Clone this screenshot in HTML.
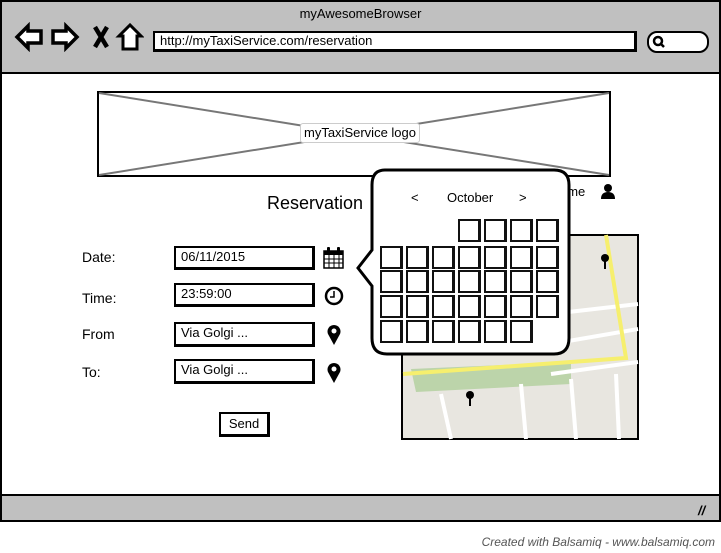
<!DOCTYPE html>
<html><head><style>
body{margin:0;width:721px;height:553px;background:#fff;font-family:"Liberation Sans",sans-serif;position:relative;overflow:hidden}
.a{position:absolute}
.inp{position:absolute;border:2px solid #000;border-right-width:3px;border-bottom-width:3px;background:#fff;font-size:13px;padding-left:5px;box-sizing:border-box;line-height:18px}
.lbl{position:absolute;font-size:14px}
.c{position:absolute;width:23px;height:23px;box-sizing:border-box;border:2px solid #111;border-right-width:3px;background:#fff}
</style></head><body>
<div class="a" style="left:0;top:0;width:717px;height:70px;background:#c0c0c0;border:2px solid #000"></div>
<div class="a" style="left:0;top:0;width:721px;top:6px;text-align:center;font-size:13px">myAwesomeBrowser</div>
<svg class="a" style="left:14px;top:22px" width="130" height="30" viewBox="0 0 130 30">
<path d="M3 15 L14 4 L14 9 L27 9 L27 21 L14 21 L14 26 Z" fill="#fff" stroke="#000" stroke-width="3.5"/>
<path d="M78 15 L67 4 L67 9 L54 9 L54 21 L67 21 L67 26 Z" transform="translate(-15 0)" fill="#fff" stroke="#000" stroke-width="3.5"/>
<path d="M81 5 L93 25 M93 5 L81 25" stroke="#000" stroke-width="4.5"/>
<path d="M116 3 L105 14 L109 14 L109 27 L123 27 L123 14 L127 14 Z" fill="#fff" stroke="#000" stroke-width="3"/>
</svg>
<div class="a" style="left:153px;top:31px;width:474px;height:16px;background:#fff;border:2px solid #000;border-right-width:3px;border-bottom-width:3px;font-size:13px;line-height:16px;padding-left:5px">http://myTaxiService.com/reservation</div>
<div class="a" style="left:647px;top:31px;width:58px;height:18px;background:#fff;border:2px solid #000;border-radius:10px"></div>
<svg class="a" style="left:651px;top:34px" width="16" height="16"><circle cx="7" cy="7" r="4" fill="none" stroke="#000" stroke-width="2.5"/><path d="M9 9 L13 13" stroke="#000" stroke-width="2.5"/></svg>
<div class="a" style="left:0;top:72px;width:717px;height:423px;border-left:2px solid #000;border-right:2px solid #000"></div>
<div class="a" style="left:0;top:494px;width:717px;height:24px;background:#c0c0c0;border:2px solid #000"></div>
<div class="a" style="left:698px;top:503px;font-size:13px;font-weight:bold;font-style:italic">//</div>
<div class="a" style="right:6px;top:535px;font-size:12px;font-style:italic;color:#555">Created with Balsamiq - www.balsamiq.com</div>
<svg class="a" style="left:97px;top:91px" width="514" height="86"><rect x="1" y="1" width="512" height="84" fill="#fff" stroke="#000" stroke-width="2"/><path d="M2 2 L512 84 M512 2 L2 84" stroke="#777" stroke-width="2"/></svg>
<div class="a" style="left:300px;top:123px;width:118px;height:18px;background:#fff;border:1px solid #ccc;border-radius:3px;font-size:13px;text-align:center;line-height:18px">myTaxiService logo</div>
<div class="a" style="left:267px;top:193px;font-size:18px">Reservation</div>
<div class="a" style="left:560px;top:184px;font-size:13px">ame</div>
<svg class="a" style="left:600px;top:183px" width="16" height="16"><circle cx="8" cy="5" r="4"/><path d="M1 16 Q1 9 8 9 Q15 9 15 16 Z"/></svg>
<div class="lbl" style="left:82px;top:249px">Date:</div>
<div class="lbl" style="left:82px;top:290px">Time:</div>
<div class="lbl" style="left:82px;top:326px">From</div>
<div class="lbl" style="left:82px;top:364px">To:</div>
<div class="inp" style="left:174px;top:246px;width:141px;height:24px">06/11/2015</div>
<div class="inp" style="left:174px;top:283px;width:141px;height:24px">23:59:00</div>
<div class="inp" style="left:174px;top:322px;width:141px;height:25px">Via Golgi ...</div>
<div class="inp" style="left:174px;top:359px;width:141px;height:25px">Via Golgi ...</div>
<svg class="a" style="left:322px;top:246px" width="24" height="24"><rect x="2" y="5" width="19" height="17" fill="#fff" stroke="#000" stroke-width="1.5"/><rect x="2" y="5" width="19" height="4"/><path d="M2 13H21M2 17H21M7 9V22M12 9V22M17 9V22" stroke="#000"/><rect x="5" y="1" width="3" height="6" rx="1"/><rect x="15" y="1" width="3" height="6" rx="1"/></svg>
<svg class="a" style="left:323px;top:285px" width="22" height="22"><circle cx="11" cy="11" r="8" fill="none" stroke="#000" stroke-width="2.5"/><path d="M11 6V12H7" fill="none" stroke="#000" stroke-width="1.5"/></svg>
<svg class="a" style="left:326px;top:323px" width="16" height="24"><path d="M8 22 L2 11 A6.5 6.5 0 1 1 14 11 Z" /><circle cx="8" cy="8" r="2.5" fill="#fff"/></svg>
<svg class="a" style="left:326px;top:361px" width="16" height="24"><path d="M8 22 L2 11 A6.5 6.5 0 1 1 14 11 Z" /><circle cx="8" cy="8" r="2.5" fill="#fff"/></svg>
<div class="a" style="left:219px;top:412px;width:46px;height:20px;border:2px solid #000;border-right-width:3px;border-bottom-width:3px;font-size:13px;text-align:center;line-height:20px;background:#fff">Send</div>
<svg class="a" style="left:401px;top:234px" width="238" height="206">
<rect x="1" y="1" width="236" height="204" fill="#e8e6e0" stroke="#000" stroke-width="2"/>
<path d="M10 135 L170 128 L170 150 L15 158 Z" fill="#bcd4aa"/>
<path d="M150 80 L237 70 M150 110 L237 95 M150 140 L237 128" stroke="#fff" stroke-width="4"/>
<path d="M40 160 L50 205 M120 150 L125 205 M170 145 L175 205 M215 140 L218 205" stroke="#fff" stroke-width="4"/>
<path d="M205 1 L225 124 L2 140" fill="none" stroke="#f6ef6e" stroke-width="4"/>
<circle cx="204" cy="24" r="4"/><path d="M204 26V35" stroke="#000" stroke-width="2"/>
<circle cx="69" cy="161" r="4"/><path d="M69 163V172" stroke="#000" stroke-width="2"/>
</svg>
<svg class="a" style="left:352px;top:168px" width="220" height="190"><path d="M33 2 H202 Q217 2 217 17 V170 Q217 186 202 186 H35 Q20 186 20 170 V118 L6 100 L20 82 V17 Q20 2 33 2 Z" fill="#fff" stroke="#000" stroke-width="3"/></svg>
<div class="a" style="left:411px;top:190px;font-size:13px">&lt;</div>
<div class="a" style="left:447px;top:190px;font-size:13px">October</div>
<div class="a" style="left:519px;top:190px;font-size:13px">&gt;</div>
<div class="c" style="left:458px;top:219px"></div><div class="c" style="left:484px;top:219px"></div><div class="c" style="left:510px;top:219px"></div><div class="c" style="left:536px;top:219px"></div>
<div class="c" style="left:380px;top:246px"></div><div class="c" style="left:406px;top:246px"></div><div class="c" style="left:432px;top:246px"></div><div class="c" style="left:458px;top:246px"></div><div class="c" style="left:484px;top:246px"></div><div class="c" style="left:510px;top:246px"></div><div class="c" style="left:536px;top:246px"></div>
<div class="c" style="left:380px;top:270px"></div><div class="c" style="left:406px;top:270px"></div><div class="c" style="left:432px;top:270px"></div><div class="c" style="left:458px;top:270px"></div><div class="c" style="left:484px;top:270px"></div><div class="c" style="left:510px;top:270px"></div><div class="c" style="left:536px;top:270px"></div>
<div class="c" style="left:380px;top:295px"></div><div class="c" style="left:406px;top:295px"></div><div class="c" style="left:432px;top:295px"></div><div class="c" style="left:458px;top:295px"></div><div class="c" style="left:484px;top:295px"></div><div class="c" style="left:510px;top:295px"></div><div class="c" style="left:536px;top:295px"></div>
<div class="c" style="left:380px;top:320px"></div><div class="c" style="left:406px;top:320px"></div><div class="c" style="left:432px;top:320px"></div><div class="c" style="left:458px;top:320px"></div><div class="c" style="left:484px;top:320px"></div><div class="c" style="left:510px;top:320px"></div>
</body></html>
